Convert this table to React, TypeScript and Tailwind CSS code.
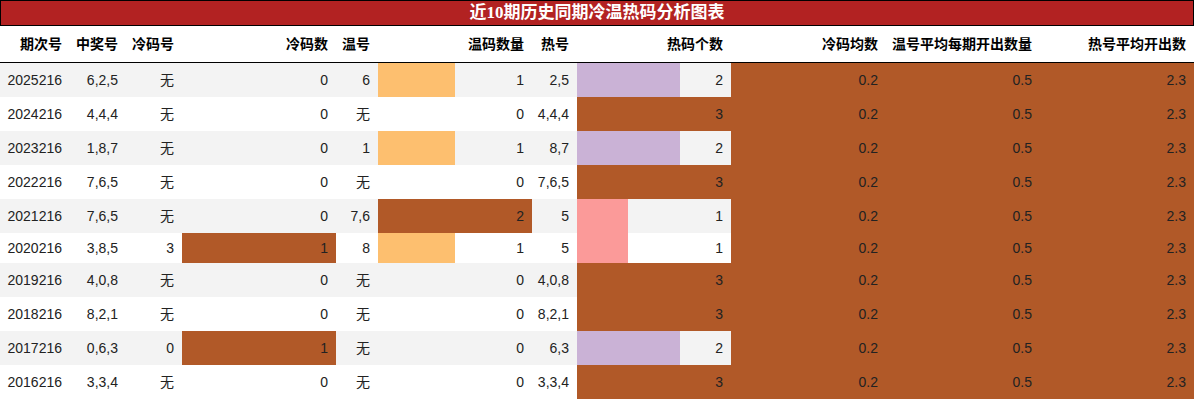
const BROWN = "#b15928";
const ORANGE = "#fdbf6f";
const PURPLE = "#cab2d6";
const PINK = "#fb9a99";

type Row = {
  qi: string;
  jiang: string;
  lengHao: string;
  lengShu: number;
  wenHao: string;
  wenShu: number;
  reHao: string;
  reShu: number;
  h?: string;
};

const rows: Row[] = [
  { qi: "2025216", jiang: "6,2,5", lengHao: "无", lengShu: 0, wenHao: "6", wenShu: 1, reHao: "2,5", reShu: 2 },
  { qi: "2024216", jiang: "4,4,4", lengHao: "无", lengShu: 0, wenHao: "无", wenShu: 0, reHao: "4,4,4", reShu: 3 },
  { qi: "2023216", jiang: "1,8,7", lengHao: "无", lengShu: 0, wenHao: "1", wenShu: 1, reHao: "8,7", reShu: 2 },
  { qi: "2022216", jiang: "7,6,5", lengHao: "无", lengShu: 0, wenHao: "无", wenShu: 0, reHao: "7,6,5", reShu: 3 },
  { qi: "2021216", jiang: "7,6,5", lengHao: "无", lengShu: 0, wenHao: "7,6", wenShu: 2, reHao: "5", reShu: 1 },
  { qi: "2020216", jiang: "3,8,5", lengHao: "3", lengShu: 1, wenHao: "8", wenShu: 1, reHao: "5", reShu: 1, h: "h-[30px]" },
  { qi: "2019216", jiang: "4,0,8", lengHao: "无", lengShu: 0, wenHao: "无", wenShu: 0, reHao: "4,0,8", reShu: 3 },
  { qi: "2018216", jiang: "8,2,1", lengHao: "无", lengShu: 0, wenHao: "无", wenShu: 0, reHao: "8,2,1", reShu: 3 },
  { qi: "2017216", jiang: "0,6,3", lengHao: "0", lengShu: 1, wenHao: "无", wenShu: 0, reHao: "6,3", reShu: 2 },
  { qi: "2016216", jiang: "3,3,4", lengHao: "无", lengShu: 0, wenHao: "无", wenShu: 0, reHao: "3,3,4", reShu: 3 },
];

const headers = [
  "期次号",
  "中奖号",
  "冷码号",
  "冷码数",
  "温号",
  "温码数量",
  "热号",
  "热码个数",
  "冷码均数",
  "温号平均每期开出数量",
  "热号平均开出数",
];

const cols =
  "grid grid-cols-[70px_56px_56px_154px_42px_154px_45px_154px_155px_154px_154px]";

const wenColor = (v: number) => (v === 2 ? BROWN : ORANGE);
const reColor = (v: number) => (v === 3 ? BROWN : v === 2 ? PURPLE : PINK);

function Cell({ children }: { children: React.ReactNode }) {
  return <div className="flex items-center justify-end pr-2">{children}</div>;
}

function BarCell({ value, pct, color }: { value: string | number; pct: number; color: string }) {
  return (
    <div className="relative flex items-center justify-end pr-2">
      {pct > 0 && (
        <div className="absolute inset-y-0 left-0" style={{ width: `${pct}%`, backgroundColor: color }} />
      )}
      <span className="relative">{value}</span>
    </div>
  );
}

export default function App() {
  return (
    <div
      className="w-[1194px] h-[400px] bg-white overflow-hidden text-[14px] text-[#222]"
      style={{ fontFamily: '"Liberation Sans", "Noto Sans CJK SC", sans-serif' }}
    >
      {/* 标题 */}
      <div
        className="h-[26px] bg-[#b22222] border border-black flex items-center justify-center text-white font-bold text-[17px]"
        style={{ fontFamily: '"Liberation Serif", "Noto Sans CJK SC", serif' }}
      >
        近10期历史同期冷温热码分析图表
      </div>

      {/* 表头 */}
      <div className={`${cols} h-[37px] border-b border-black font-bold text-black`}>
        {headers.map((h) => (
          <Cell key={h}>{h}</Cell>
        ))}
      </div>

      {/* 数据行 */}
      {rows.map((r, i) => (
        <div key={r.qi} className={`${cols} ${r.h ?? "h-[34px]"} ${i % 2 === 0 ? "bg-[#f3f3f3]" : "bg-white"}`}>
          <Cell>{r.qi}</Cell>
          <Cell>{r.jiang}</Cell>
          <Cell>{r.lengHao}</Cell>
          <BarCell value={r.lengShu} pct={r.lengShu * 100} color={BROWN} />
          <Cell>{r.wenHao}</Cell>
          <BarCell value={r.wenShu} pct={(r.wenShu / 2) * 100} color={wenColor(r.wenShu)} />
          <Cell>{r.reHao}</Cell>
          <BarCell value={r.reShu} pct={(r.reShu / 3) * 100} color={reColor(r.reShu)} />
          <BarCell value="0.2" pct={100} color={BROWN} />
          <BarCell value="0.5" pct={100} color={BROWN} />
          <BarCell value="2.3" pct={100} color={BROWN} />
        </div>
      ))}
    </div>
  );
}
